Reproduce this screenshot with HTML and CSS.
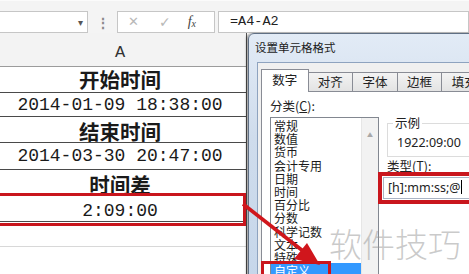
FILE: index.html
```html
<!DOCTYPE html>
<html>
<head>
  <meta charset="utf-8">
  <title>设置单元格格式</title>
  <link rel="stylesheet" href="styles.css">
</head>
<body>

<div class="app">

  <div class="formula-bar">
    <div class="name-box"><span class="dd">&#9662;</span></div>
    <div class="dots">&#8942;</div>
    <div class="fx-box">
      <span class="cancel">&#10005;</span>
      <span class="enter">&#10003;</span>
      <span class="fx"><i>f</i><sub>x</sub></span>
    </div>
    <div class="formula">=A4-A2</div>
  </div>

  <div class="sheet">
    <div class="col-head">A</div>
    <div class="cell bold r1">开始时间</div>
    <div class="cell mono r2">2014-01-09 18:38:00</div>
    <div class="cell bold r3">结束时间</div>
    <div class="cell mono r4">2014-03-30 20:47:00</div>
    <div class="cell bold r5">时间差</div>
    <div class="cell mono r6">2:09:00</div>
    <div class="cell plain r7"></div>
    <div class="cell plain r8"></div>
  </div>

  <div class="dialog">
    <div class="title">设置单元格格式</div>
    <div class="panel">
      <div class="tabs">
        <div class="tab active">数字</div>
        <div class="tab">对齐</div>
        <div class="tab">字体</div>
        <div class="tab">边框</div>
        <div class="tab">填充</div>
      </div>
      <div class="page">
        <div class="left-col">
          <div class="label">分类(<u>C</u>):</div>
          <div class="listbox">
            <ul class="items">
              <li>常规</li>
              <li>数值</li>
              <li>货币</li>
              <li>会计专用</li>
              <li>日期</li>
              <li>时间</li>
              <li>百分比</li>
              <li>分数</li>
              <li>科学记数</li>
              <li>文本</li>
              <li>特殊</li>
              <li class="sel">自定义</li>
            </ul>
            <div class="scroll"><span class="up">&#9650;</span></div>
          </div>
        </div>
        <div class="right-col">
          <div class="sample">
            <span class="legend">示例</span>
            <div class="sample-val">1922:09:00</div>
          </div>
          <div class="label type-label">类型(<u>T</u>):</div>
          <div class="type-input">[h]:mm:ss;@<span class="caret"></span></div>
        </div>
      </div>
    </div>
  </div>

  <!-- red highlights from the tutorial -->
  <div class="mark mark-cell"></div>
  <div class="mark mark-type"></div>
  <div class="mark mark-item"></div>
  <svg class="arrow" width="469" height="274" viewBox="0 0 469 274">
    <line x1="243" y1="204" x2="303" y2="251" stroke="#d0161c" stroke-width="3.5"/>
    <polygon points="320,265 294,259 307,243" fill="#d0161c"/>
  </svg>

  <div class="watermark">软件技巧</div>
</div>

</body>
</html>
```

FILE: styles.css
```css
body {
  margin: 0;
  background: #ffffff;
  font-family: "Noto Sans CJK SC", sans-serif;
}
.app {
  position: relative;
  width: 469px;
  height: 274px;
  overflow: hidden;
  background: #ffffff;
}

/* formula bar */
.formula-bar {
  display: flex;
  align-items: center;
  height: 33px;
  padding-top: 9px;
  box-sizing: border-box;
  background: #f4f4f4;
  border-top: 1px solid #fbfbfb;
}
.name-box {
  width: 88px;
  height: 22px;
  box-sizing: border-box;
  background: #fff;
  border: 1px solid #c6c6c6;
  border-left: none;
  position: relative;
}
.name-box .dd {
  position: absolute;
  right: 4px;
  top: 2px;
  font-size: 10px;
  color: #555;
}
.dots {
  width: 29px;
  text-align: center;
  color: #8a8a8a;
  font-size: 14px;
  font-weight: bold;
}
.fx-box {
  width: 98px;
  height: 22px;
  box-sizing: border-box;
  background: #fff;
  border: 1px solid #c6c6c6;
  display: flex;
  align-items: center;
  font-family: "DejaVu Sans", sans-serif;
}
.fx-box .cancel {
  margin-left: 10px;
  color: #b8b8b8;
  font-size: 13px;
}
.fx-box .enter {
  margin-left: 20px;
  color: #b8b8b8;
  font-size: 14px;
}
.fx-box .fx {
  margin-left: 17px;
  font-family: "Liberation Serif", serif;
  font-size: 14px;
  color: #444;
}
.fx-box .fx sub {
  font-size: 10px;
  font-style: italic;
  vertical-align: -1px;
}
.formula {
  flex: 1;
  margin-left: 3px;
  height: 22px;
  box-sizing: border-box;
  background: #fff;
  border: 1px solid #c6c6c6;
  padding-left: 11px;
  font-family: "Liberation Mono", monospace;
  font-size: 13.5px;
  line-height: 20px;
  color: #222;
}

/* sheet */
.sheet {
  margin-left: -6px;
  width: 252px;
  border-right: 1px solid #555;
}
.col-head {
  height: 34px;
  box-sizing: border-box;
  background: #f3f3f3;
  border-bottom: 1px solid #9b9b9b;
  text-align: center;
  font-family: "Liberation Mono", monospace;
  font-size: 17px;
  line-height: 40px;
  color: #333;
}
.cell {
  box-sizing: border-box;
  border-bottom: 1px solid #4a4a4a;
  text-align: center;
  color: #1a1a1a;
  background: #fff;
}
.bold {
  font-family: "Noto Sans CJK SC", sans-serif;
  font-weight: bold;
  font-size: 20.5px;
}
.mono {
  font-family: "Liberation Mono", monospace;
  font-size: 18px;
}
.plain {
  border-bottom: 1px solid #d8d8d8;
}
.r1 { height: 26px; line-height: 25px; }
.r2 { height: 24px; line-height: 25px; }
.r3 { height: 26px; line-height: 28px; }
.r4 { height: 27px; line-height: 27px; }
.r5 { height: 26px; line-height: 29px; }
.r6 { height: 26px; line-height: 30px; }
.r7 { height: 25px; }
.r8 { height: 27px; border-bottom: none; }

/* dialog window */
.dialog {
  position: absolute;
  left: 248px;
  top: 33px;
  width: 240px;
  height: 260px;
  box-sizing: border-box;
  border: 1px solid #5f6f84;
  border-radius: 6px 6px 0 0;
  background: linear-gradient(180deg, #e2ebf6 0%, #cfdcec 40%, #c5d6ea 100%);
  box-shadow: -2px 0 2px rgba(0, 0, 0, 0.35);
}
.title {
  height: 28px;
  padding-left: 6px;
  font-size: 11.5px;
  line-height: 27px;
  color: #1b1b1b;
}
.panel {
  margin-left: 8px;
  height: 240px;
  background: #f0f0f0;
  border: 1px solid #8ea3bf;
  padding: 6px 0 0 3px;
}
.tabs {
  display: flex;
  align-items: flex-end;
  height: 22px;
  position: relative;
  z-index: 1;
}
.tab {
  width: 47px;
  height: 19px;
  box-sizing: border-box;
  margin-right: -1px;
  border: 1px solid #898c95;
  border-bottom: none;
  background: linear-gradient(180deg, #f3f3f3, #e3e3e3);
  text-align: center;
  font-size: 12.5px;
  line-height: 18px;
  color: #222;
}
.tab.active {
  width: 49px;
  height: 23px;
  margin-bottom: -1px;
  background: #fff;
  line-height: 20px;
}
.page {
  display: flex;
  height: 200px;
  margin-top: 0;
  background: #fff;
  border: 1px solid #898c95;
  padding: 6px 0 0 8px;
}
.label {
  font-size: 12.5px;
  line-height: 16px;
  color: #222;
}
.listbox {
  display: flex;
  margin-top: 3px;
  width: 109px;
  height: 170px;
  box-sizing: border-box;
  border: 1px solid #828790;
}
.items {
  flex: 1;
  list-style: none;
  margin: 0;
  padding: 1px 0 0 3px;
  font-size: 12px;
  line-height: 13.2px;
  color: #1a1a1a;
}
.items .sel {
  margin-left: -3px;
  padding-left: 3px;
  background: #3399ff;
  color: #fff;
  line-height: 16px;
  margin-top: -1px;
}
.scroll {
  width: 16px;
  background: #f2f2f2;
  border-left: 1px solid #e6e6e6;
  text-align: center;
}
.scroll .up {
  font-size: 6px;
  color: #a8a8a8;
  line-height: 20px;
}
.right-col {
  margin-left: 8px;
  flex: 1;
}
.sample {
  margin-top: 25px;
  height: 34px;
  box-sizing: border-box;
  border: 1px solid #dcdcdc;
  border-right: none;
  position: relative;
}
.legend {
  position: absolute;
  left: 5px;
  top: -9px;
  padding: 0 2px;
  background: #fff;
  font-size: 12.5px;
  line-height: 16px;
  color: #222;
}
.sample-val {
  padding: 11px 0 0 9px;
  font-family: "Noto Sans", sans-serif;
  font-size: 12.5px;
  line-height: 16px;
  color: #222;
}
.type-label {
  margin-top: 1px;
}
.type-input {
  margin: 3px 0 0 -4px;
  height: 22px;
  box-sizing: border-box;
  border: 1px solid #aab4c4;
  padding-left: 4px;
  font-family: "Noto Sans", sans-serif;
  font-size: 12.5px;
  line-height: 20px;
  color: #222;
}
.caret {
  display: inline-block;
  width: 1px;
  height: 14px;
  background: #000;
  vertical-align: -2px;
}

/* red tutorial marks */
.mark {
  position: absolute;
  border: 3px solid #c9161d;
  box-sizing: border-box;
}
.mark-cell {
  left: -3px;
  top: 193px;
  width: 249px;
  height: 33px;
}
.mark-type {
  left: 378px;
  top: 172px;
  width: 100px;
  height: 32px;
  border-width: 4px;
}
.mark-item {
  left: 261px;
  top: 261px;
  width: 70px;
  height: 20px;
}
.arrow {
  position: absolute;
  left: 0;
  top: 0;
}
.watermark {
  position: absolute;
  left: 329px;
  top: 221px;
  font-size: 33px;
  font-weight: 300;
  line-height: 44px;
  color: rgba(150, 150, 150, 0.5);
}
```
